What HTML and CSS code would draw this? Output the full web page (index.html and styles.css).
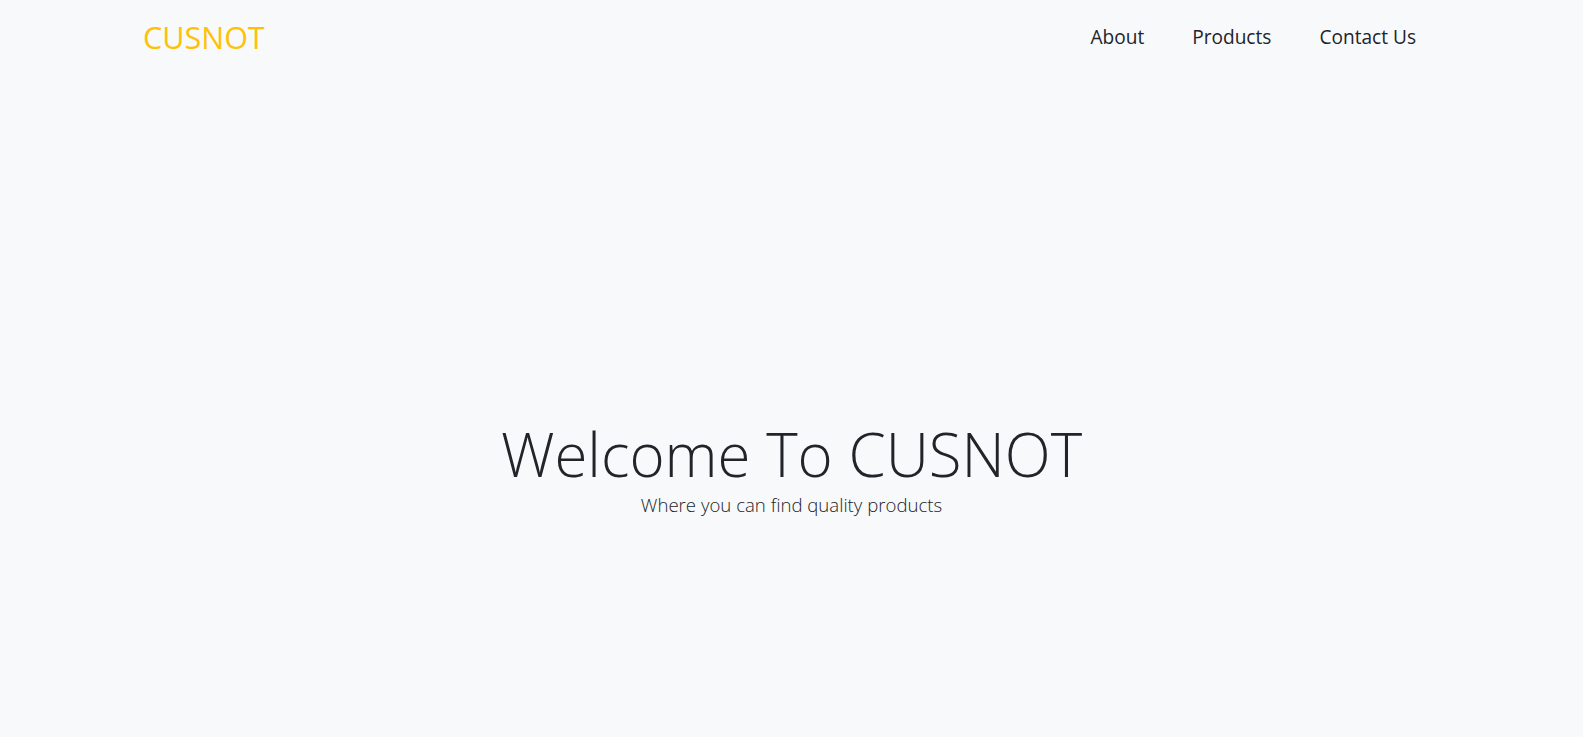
FILE: index.html
```html
<!DOCTYPE html>
<html lang="en">
<head>
<meta charset="utf-8">
<title>CUSNOT</title>
<link rel="stylesheet" href="styles.css">
</head>
<body>
<header class="navbar">
  <div class="nav-inner">
    <a class="brand" href="#">CUSNOT</a>
    <nav class="nav-links">
      <a class="nav-link" href="#">About</a>
      <a class="nav-link" href="#">Products</a>
      <a class="nav-link" href="#">Contact Us</a>
    </nav>
  </div>
</header>
<main class="hero">
  <h1 class="hero-title">Welcome To CUSNOT</h1>
  <p class="hero-lead">Where you can find quality products</p>
</main>
</body>
</html>
```
FILE: styles.css
```css
html, body {
  margin: 0;
  padding: 0;
}
body {
  background: #f8f9fa;
  color: #212529;
  font-family: "Open Sans", "Noto Sans", "Liberation Sans", sans-serif;
  height: 737px;
  overflow: hidden;
}
.navbar {
  height: 74px;
  display: flex;
  align-items: center;
}
.nav-inner {
  width: 100%;
  display: flex;
  align-items: center;
  justify-content: space-between;
  padding: 0 143px 0 143px;
  box-sizing: border-box;
}
.brand {
  color: #ffc107;
  text-decoration: none;
  font-size: 30.5px;
  font-weight: 400;
  line-height: 1.2;
}
.nav-links {
  display: flex;
  gap: 0;
}
.nav-link {
  color: #212529;
  text-decoration: none;
  font-size: 19.1px;
  line-height: 1.5;
  padding: 0 24px;
}
.hero {
  display: flex;
  flex-direction: column;
  align-items: center;
  padding-top: 344px;
}
.hero-title {
  margin: 0;
  font-size: 60px;
  font-weight: 300;
  line-height: 1.2;
}
.hero-lead {
  margin: 1px 0 0;
  font-size: 18.6px;
  font-weight: 300;
  line-height: 1.5;
}
```
